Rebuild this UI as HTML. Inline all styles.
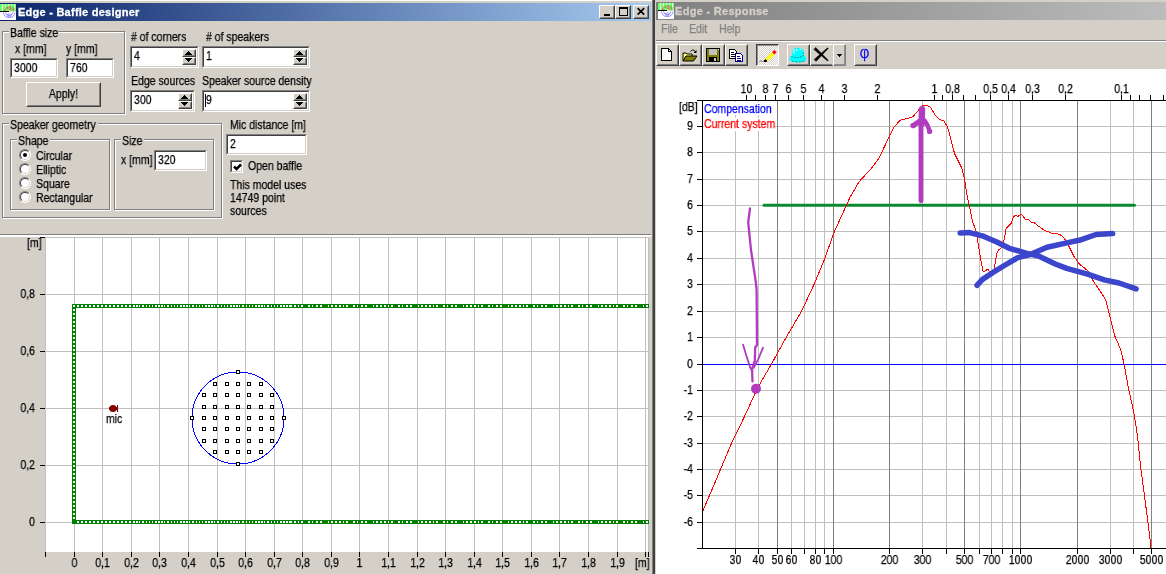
<!DOCTYPE html><html><head><meta charset="utf-8"><title>Edge</title><style>
html,body{margin:0;padding:0;}
html{overflow:hidden;background:#D4D0C8;}
body{width:1166px;height:574px;overflow:hidden;background:#D4D0C8;position:relative;
 font-family:"Liberation Sans",sans-serif;font-size:11px;color:#000;line-height:13px;}
.a{position:absolute;white-space:nowrap;}
.t{position:absolute;white-space:nowrap;margin-top:1px;will-change:transform;-webkit-text-stroke:0.25px;height:13px;line-height:13px;font-size:12.4px;transform:scaleX(.847);transform-origin:0 50%;}
.tc{transform-origin:50% 50%;text-align:center;}
.tr{transform-origin:100% 50%;text-align:right;}
.sunk{position:absolute;background:#fff;box-sizing:border-box;
 border:1px solid;border-color:#808080 #fff #fff #808080;}
.sunk:before{content:"";position:absolute;left:0;top:0;right:0;bottom:0;
 border:1px solid;border-color:#404040 #D4D0C8 #D4D0C8 #404040;}
.sunk span{position:absolute;left:3px;top:3px;will-change:transform;-webkit-text-stroke:0.25px;line-height:13px;font-size:12.4px;transform:scaleX(.847);transform-origin:0 50%;white-space:nowrap;}
.btn{position:absolute;background:#D4D0C8;box-sizing:border-box;
 border:1px solid;border-color:#fff #404040 #404040 #fff;}
.btn:before{content:"";position:absolute;left:0;top:0;right:0;bottom:0;
 border:1px solid;border-color:#D4D0C8 #808080 #808080 #D4D0C8;}
.tb{position:absolute;background:#D4D0C8;box-sizing:border-box;
 border:1px solid;border-color:#fff #404040 #404040 #fff;}
.tb:before{content:"";position:absolute;left:0;top:0;right:0;bottom:0;
 border:1px solid;border-color:#D4D0C8 #808080 #808080 #D4D0C8;}
.grp{position:absolute;box-sizing:border-box;border:1px solid #808080;
 box-shadow:1px 1px 0 #fff, inset 1px 1px 0 #fff;}
.gl{position:absolute;margin-top:1px;background:#D4D0C8;padding:0 1px;height:13px;line-height:13px;white-space:nowrap;}
.gl b{display:inline-block;will-change:transform;-webkit-text-stroke:0.25px;font-weight:normal;font-size:12.4px;transform:scaleX(.847);transform-origin:0 50%;}
.radio{position:absolute;width:12px;height:12px;box-sizing:border-box;border-radius:50%;background:#fff;
 border:1px solid;border-color:#808080 #fff #fff #808080;}
.radio:before{content:"";position:absolute;left:0;top:0;right:0;bottom:0;border-radius:50%;
 border:1px solid;border-color:#404040 #D4D0C8 #D4D0C8 #404040;}
.ud{position:absolute;width:14px;height:8px;background:#D4D0C8;box-sizing:border-box;
 border:1px solid;border-color:#fff #404040 #404040 #fff;}
.ud:before{content:"";position:absolute;left:0;top:0;right:0;bottom:0;
 border:1px solid;border-color:#D4D0C8 #808080 #808080 #D4D0C8;}
svg{position:absolute;left:0;top:0;overflow:visible;}
svg text{font-family:"Liberation Sans",sans-serif;font-size:11px;}
</style></head><body>
<div class="a" style="left:0;top:0;width:652px;height:1px;background:#fff"></div>
<div class="a" style="left:0;top:3px;width:651px;height:18px;background:linear-gradient(90deg,#0A246A 0%,#A6CAF0 100%)"></div>
<svg class="a" style="left:0px;top:4px" width="16" height="16" viewBox="0 0 16 16"><rect x="0" y="0" width="16" height="16" fill="#fff"/><rect x="0" y="0" width="16" height="7.5" fill="#66FF66"/><rect x="2.2" y="0" width="0.9" height="7.5" fill="#fff"/><rect x="5.0" y="0" width="0.9" height="7.5" fill="#fff"/><rect x="8.2" y="0" width="0.9" height="7.5" fill="#fff"/><rect x="11.2" y="0" width="0.9" height="7.5" fill="#fff"/><rect x="14.2" y="0" width="0.9" height="7.5" fill="#fff"/><path d="M4 5.5h1.5v1.5h-1.5z M6.5 3h1.5v1.8h-1.5z M9.2 2.2h1.6v1.5h-1.6z M9.6 4.3h1.5v1.6h-1.5z M12.2 3.2h1.6v1.6h-1.6z M12.6 5.3h1.4v1.5h-1.4z M3.4 6.4h1.2v1h-1.2z" fill="#5AA82A"/><path d="M5.4 3.2v3.6M8.4 2v4.5M11.4 2v5.5M14.1 4v3.5" stroke="#FF6060" stroke-width=".9" fill="none" opacity=".85"/><rect x="0" y="7" width="9" height="1" fill="#000"/><path d="M3.5 8.5 A5.8 5.8 0 0 0 15 8.5 M5.5 8.5 A3.8 3.8 0 0 0 13 8.5 M7 11 A3 3 0 0 1 11.5 11 M7.5 12.6 A3 3 0 0 1 11 12.6" stroke="#6A6AFF" stroke-width="1" fill="none" opacity=".75"/></svg>
<div class="a" style="left:17.5px;top:5px;height:14px;line-height:14px;color:#fff;font-weight:bold;font-size:11px;letter-spacing:0.25px;-webkit-text-stroke:0.3px;will-change:transform" id="ttl1">Edge - Baffle designer</div>
<div class="btn" style="left:599px;top:5px;width:16px;height:14px"><svg width="12" height="10" style="left:1px;top:1px" viewBox="0 0 12 10"><rect x="3" y="7" width="6" height="2" fill="#000"/></svg></div>
<div class="btn" style="left:615px;top:5px;width:16px;height:14px"><svg width="12" height="10" style="left:1px;top:1px" viewBox="0 0 12 10"><rect x="2.5" y="1.5" width="8" height="7" fill="none" stroke="#000"/><rect x="2" y="0" width="9" height="2" fill="#000"/></svg></div>
<div class="btn" style="left:633px;top:5px;width:16px;height:14px"><svg width="12" height="10" style="left:1px;top:1px" viewBox="0 0 12 10"><path d="M2.6 1.2 L9.2 7.6 M9.2 1.2 L2.6 7.6" stroke="#000" stroke-width="1.7" fill="none"/></svg></div>
<div class="a" style="left:652px;top:0;width:1px;height:574px;background:#808080"></div>
<div class="a" style="left:653px;top:0;width:2px;height:574px;background:#404040"></div>
<div class="grp" style="left:2px;top:31px;width:123px;height:83px"></div>
<div class="gl" style="left:9px;top:26px;width:47px"><b>Baffle size</b></div>
<div class="t" style="left:15px;top:42px">x [mm]</div>
<div class="t" style="left:66px;top:42px">y [mm]</div>
<div class="sunk" style="left:10px;top:58px;width:48px;height:20px"><span>3000</span></div>
<div class="sunk" style="left:66px;top:58px;width:48px;height:20px"><span>760</span></div>
<div class="btn" style="left:26px;top:82px;width:75px;height:25px"><div class="t tc" style="left:0;width:73px;top:4px">Apply!</div></div>
<div class="t" style="left:131px;top:30px"># of corners</div>
<div class="t" style="left:206px;top:30px"># of speakers</div>
<div class="sunk" style="left:130px;top:46px;width:69px;height:22px"><span style="top:3px;left:3px">4</span><div class="ud" style="left:51px;top:2px"><svg width="14" height="8" style="left:-1px;top:-1px" viewBox="0 0 14 8"><g shape-rendering="crispEdges" fill="#000"><rect x="6" y="2" width="1" height="1"/><rect x="5" y="3" width="3" height="1"/><rect x="4" y="4" width="5" height="1"/><rect x="3" y="5" width="7" height="1"/></g></svg></div><div class="ud" style="left:51px;top:10px"><svg width="14" height="8" style="left:-1px;top:-1px" viewBox="0 0 14 8"><g shape-rendering="crispEdges" fill="#000"><rect x="3" y="1" width="7" height="1"/><rect x="4" y="2" width="5" height="1"/><rect x="5" y="3" width="3" height="1"/><rect x="6" y="4" width="1" height="1"/></g></svg></div></div>
<div class="sunk" style="left:202px;top:46px;width:108px;height:22px"><span style="top:3px;left:3px">1</span><div class="ud" style="left:90px;top:2px"><svg width="14" height="8" style="left:-1px;top:-1px" viewBox="0 0 14 8"><g shape-rendering="crispEdges" fill="#000"><rect x="6" y="2" width="1" height="1"/><rect x="5" y="3" width="3" height="1"/><rect x="4" y="4" width="5" height="1"/><rect x="3" y="5" width="7" height="1"/></g></svg></div><div class="ud" style="left:90px;top:10px"><svg width="14" height="8" style="left:-1px;top:-1px" viewBox="0 0 14 8"><g shape-rendering="crispEdges" fill="#000"><rect x="3" y="1" width="7" height="1"/><rect x="4" y="2" width="5" height="1"/><rect x="5" y="3" width="3" height="1"/><rect x="6" y="4" width="1" height="1"/></g></svg></div></div>
<div class="t" style="left:131px;top:74px">Edge sources</div>
<div class="t" style="left:202px;top:74px">Speaker source density</div>
<div class="sunk" style="left:130px;top:90px;width:65px;height:22px"><span style="top:3px;left:3px">300</span><div class="ud" style="left:47px;top:2px"><svg width="14" height="8" style="left:-1px;top:-1px" viewBox="0 0 14 8"><g shape-rendering="crispEdges" fill="#000"><rect x="6" y="2" width="1" height="1"/><rect x="5" y="3" width="3" height="1"/><rect x="4" y="4" width="5" height="1"/><rect x="3" y="5" width="7" height="1"/></g></svg></div><div class="ud" style="left:47px;top:10px"><svg width="14" height="8" style="left:-1px;top:-1px" viewBox="0 0 14 8"><g shape-rendering="crispEdges" fill="#000"><rect x="3" y="1" width="7" height="1"/><rect x="4" y="2" width="5" height="1"/><rect x="5" y="3" width="3" height="1"/><rect x="6" y="4" width="1" height="1"/></g></svg></div></div>
<div class="sunk" style="left:202px;top:90px;width:108px;height:22px"><span style="top:3px;left:3px">9</span><div class="a" style="left:2px;top:3px;width:1px;height:13px;background:#000"></div><div class="ud" style="left:90px;top:2px"><svg width="14" height="8" style="left:-1px;top:-1px" viewBox="0 0 14 8"><g shape-rendering="crispEdges" fill="#000"><rect x="6" y="2" width="1" height="1"/><rect x="5" y="3" width="3" height="1"/><rect x="4" y="4" width="5" height="1"/><rect x="3" y="5" width="7" height="1"/></g></svg></div><div class="ud" style="left:90px;top:10px"><svg width="14" height="8" style="left:-1px;top:-1px" viewBox="0 0 14 8"><g shape-rendering="crispEdges" fill="#000"><rect x="3" y="1" width="7" height="1"/><rect x="4" y="2" width="5" height="1"/><rect x="5" y="3" width="3" height="1"/><rect x="6" y="4" width="1" height="1"/></g></svg></div></div>
<div class="grp" style="left:2px;top:123px;width:220px;height:95px"></div>
<div class="gl" style="left:9px;top:118px;width:87px"><b>Speaker geometry</b></div>
<div class="grp" style="left:10px;top:139px;width:100px;height:71px"></div>
<div class="gl" style="left:17px;top:134px;width:31px"><b>Shape</b></div>
<div class="grp" style="left:114px;top:139px;width:100px;height:71px"></div>
<div class="gl" style="left:121px;top:134px;width:21px"><b>Size</b></div>
<div class="radio" style="left:19px;top:149px"><div class="a" style="left:3px;top:3px;width:4px;height:4px;border-radius:50%;background:#000"></div></div>
<div class="t" style="left:36px;top:149px">Circular</div>
<div class="radio" style="left:19px;top:163px"></div>
<div class="t" style="left:36px;top:163px">Elliptic</div>
<div class="radio" style="left:19px;top:177px"></div>
<div class="t" style="left:36px;top:177px">Square</div>
<div class="radio" style="left:19px;top:191px"></div>
<div class="t" style="left:36px;top:191px">Rectangular</div>
<div class="t" style="left:121px;top:153px">x [mm]</div>
<div class="sunk" style="left:154px;top:150px;width:53px;height:21px"><span>320</span></div>
<div class="t" style="left:230px;top:118px">Mic distance [m]</div>
<div class="sunk" style="left:226px;top:134px;width:81px;height:21px"><span>2</span></div>
<div class="sunk" style="left:230px;top:160px;width:13px;height:13px"><svg width="9" height="9" style="left:2px;top:2px" viewBox="0 0 9 9"><path d="M1 3.5 L3.5 6 L8 1.5" stroke="#000" stroke-width="2.5" fill="none"/></svg></div>
<div class="t" style="left:248px;top:159px">Open baffle</div>
<div class="t" style="left:230px;top:178px">This model uses</div>
<div class="t" style="left:230px;top:191px">14749 point</div>
<div class="t" style="left:230px;top:204px">sources</div>
<div class="a" style="left:0;top:234px;width:651px;height:1px;background:#808080"></div>
<div class="a" style="left:0;top:235px;width:651px;height:2px;background:#fff"></div>
<svg id="lchart" width="652" height="574" viewBox="0 0 652 574" shape-rendering="crispEdges"><rect x="45" y="237" width="604" height="315" fill="#C0C0C0"/><rect x="46" y="238" width="603" height="314" fill="#fff"/><rect x="74" y="238" width="1" height="314" fill="#C0C0C0"/><rect x="74" y="552" width="1" height="5" fill="#000"/><rect x="102" y="238" width="1" height="314" fill="#C0C0C0"/><rect x="102" y="552" width="1" height="5" fill="#000"/><rect x="131" y="238" width="1" height="314" fill="#C0C0C0"/><rect x="131" y="552" width="1" height="5" fill="#000"/><rect x="159" y="238" width="1" height="314" fill="#C0C0C0"/><rect x="159" y="552" width="1" height="5" fill="#000"/><rect x="188" y="238" width="1" height="314" fill="#C0C0C0"/><rect x="188" y="552" width="1" height="5" fill="#000"/><rect x="217" y="238" width="1" height="314" fill="#C0C0C0"/><rect x="217" y="552" width="1" height="5" fill="#000"/><rect x="245" y="238" width="1" height="314" fill="#C0C0C0"/><rect x="245" y="552" width="1" height="5" fill="#000"/><rect x="274" y="238" width="1" height="314" fill="#C0C0C0"/><rect x="274" y="552" width="1" height="5" fill="#000"/><rect x="302" y="238" width="1" height="314" fill="#C0C0C0"/><rect x="302" y="552" width="1" height="5" fill="#000"/><rect x="331" y="238" width="1" height="314" fill="#C0C0C0"/><rect x="331" y="552" width="1" height="5" fill="#000"/><rect x="359" y="238" width="1" height="314" fill="#C0C0C0"/><rect x="359" y="552" width="1" height="5" fill="#000"/><rect x="388" y="238" width="1" height="314" fill="#C0C0C0"/><rect x="388" y="552" width="1" height="5" fill="#000"/><rect x="417" y="238" width="1" height="314" fill="#C0C0C0"/><rect x="417" y="552" width="1" height="5" fill="#000"/><rect x="445" y="238" width="1" height="314" fill="#C0C0C0"/><rect x="445" y="552" width="1" height="5" fill="#000"/><rect x="474" y="238" width="1" height="314" fill="#C0C0C0"/><rect x="474" y="552" width="1" height="5" fill="#000"/><rect x="502" y="238" width="1" height="314" fill="#C0C0C0"/><rect x="502" y="552" width="1" height="5" fill="#000"/><rect x="531" y="238" width="1" height="314" fill="#C0C0C0"/><rect x="531" y="552" width="1" height="5" fill="#000"/><rect x="559" y="238" width="1" height="314" fill="#C0C0C0"/><rect x="559" y="552" width="1" height="5" fill="#000"/><rect x="588" y="238" width="1" height="314" fill="#C0C0C0"/><rect x="588" y="552" width="1" height="5" fill="#000"/><rect x="617" y="238" width="1" height="314" fill="#C0C0C0"/><rect x="617" y="552" width="1" height="5" fill="#000"/><rect x="645" y="238" width="1" height="314" fill="#C0C0C0"/><rect x="645" y="552" width="1" height="5" fill="#000"/><rect x="648" y="238" width="1" height="314" fill="#C0C0C0"/><rect x="648" y="552" width="1" height="5" fill="#000"/><rect x="45" y="552" width="1" height="5" fill="#000"/><rect x="46" y="522" width="603" height="1" fill="#C0C0C0"/><rect x="40" y="522" width="5" height="1" fill="#000"/><rect x="46" y="465" width="603" height="1" fill="#C0C0C0"/><rect x="40" y="465" width="5" height="1" fill="#000"/><rect x="46" y="408" width="603" height="1" fill="#C0C0C0"/><rect x="40" y="408" width="5" height="1" fill="#000"/><rect x="46" y="351" width="603" height="1" fill="#C0C0C0"/><rect x="40" y="351" width="5" height="1" fill="#000"/><rect x="46" y="294" width="603" height="1" fill="#C0C0C0"/><rect x="40" y="294" width="5" height="1" fill="#000"/><rect x="40" y="237" width="5" height="1" fill="#000"/><rect x="72" y="304" width="577" height="4" fill="#008000"/><rect x="72" y="520" width="577" height="4" fill="#008000"/><rect x="72" y="304" width="4" height="220" fill="#008000"/><path d="M77 306 H133" stroke="#fff" stroke-width="2" stroke-dasharray="2 2" fill="none"/><path d="M133 306 H290" stroke="#fff" stroke-width="2" stroke-dasharray="1.5 1.5 1.5 1.5 1 2 2 1.5" fill="none"/><path d="M290 306 H649" stroke="#fff" stroke-width="2" stroke-dasharray="2 2 2 2 1 2 2 5 2 2 1 3 2 2 2 6 1 2 2 2" fill="none"/><path d="M77 522 H133" stroke="#fff" stroke-width="2" stroke-dasharray="2 2" fill="none"/><path d="M133 522 H290" stroke="#fff" stroke-width="2" stroke-dasharray="1.5 1.5 1.5 1.5 1 2 2 1.5" fill="none"/><path d="M290 522 H649" stroke="#fff" stroke-width="2" stroke-dasharray="2 2 2 2 1 2 2 5 2 2 1 3 2 2 2 6 1 2 2 2" fill="none"/><path d="M74 305 V521" stroke="#fff" stroke-width="2" stroke-dasharray="2 2" fill="none"/><circle cx="238" cy="418" r="46" fill="none" stroke="#0000FF" stroke-width="1" shape-rendering="crispEdges"/><rect x="213.5" y="382.5" width="3" height="3" fill="#fff" stroke="#000" stroke-width="1"/><rect x="225.5" y="382.5" width="3" height="3" fill="#fff" stroke="#000" stroke-width="1"/><rect x="236.5" y="382.5" width="3" height="3" fill="#fff" stroke="#000" stroke-width="1"/><rect x="247.5" y="382.5" width="3" height="3" fill="#fff" stroke="#000" stroke-width="1"/><rect x="259.5" y="382.5" width="3" height="3" fill="#fff" stroke="#000" stroke-width="1"/><rect x="202.5" y="393.5" width="3" height="3" fill="#fff" stroke="#000" stroke-width="1"/><rect x="213.5" y="393.5" width="3" height="3" fill="#fff" stroke="#000" stroke-width="1"/><rect x="225.5" y="393.5" width="3" height="3" fill="#fff" stroke="#000" stroke-width="1"/><rect x="236.5" y="393.5" width="3" height="3" fill="#fff" stroke="#000" stroke-width="1"/><rect x="247.5" y="393.5" width="3" height="3" fill="#fff" stroke="#000" stroke-width="1"/><rect x="259.5" y="393.5" width="3" height="3" fill="#fff" stroke="#000" stroke-width="1"/><rect x="270.5" y="393.5" width="3" height="3" fill="#fff" stroke="#000" stroke-width="1"/><rect x="202.5" y="405.5" width="3" height="3" fill="#fff" stroke="#000" stroke-width="1"/><rect x="213.5" y="405.5" width="3" height="3" fill="#fff" stroke="#000" stroke-width="1"/><rect x="225.5" y="405.5" width="3" height="3" fill="#fff" stroke="#000" stroke-width="1"/><rect x="236.5" y="405.5" width="3" height="3" fill="#fff" stroke="#000" stroke-width="1"/><rect x="247.5" y="405.5" width="3" height="3" fill="#fff" stroke="#000" stroke-width="1"/><rect x="259.5" y="405.5" width="3" height="3" fill="#fff" stroke="#000" stroke-width="1"/><rect x="270.5" y="405.5" width="3" height="3" fill="#fff" stroke="#000" stroke-width="1"/><rect x="202.5" y="416.5" width="3" height="3" fill="#fff" stroke="#000" stroke-width="1"/><rect x="213.5" y="416.5" width="3" height="3" fill="#fff" stroke="#000" stroke-width="1"/><rect x="225.5" y="416.5" width="3" height="3" fill="#fff" stroke="#000" stroke-width="1"/><rect x="236.5" y="416.5" width="3" height="3" fill="#fff" stroke="#000" stroke-width="1"/><rect x="247.5" y="416.5" width="3" height="3" fill="#fff" stroke="#000" stroke-width="1"/><rect x="259.5" y="416.5" width="3" height="3" fill="#fff" stroke="#000" stroke-width="1"/><rect x="270.5" y="416.5" width="3" height="3" fill="#fff" stroke="#000" stroke-width="1"/><rect x="202.5" y="427.5" width="3" height="3" fill="#fff" stroke="#000" stroke-width="1"/><rect x="213.5" y="427.5" width="3" height="3" fill="#fff" stroke="#000" stroke-width="1"/><rect x="225.5" y="427.5" width="3" height="3" fill="#fff" stroke="#000" stroke-width="1"/><rect x="236.5" y="427.5" width="3" height="3" fill="#fff" stroke="#000" stroke-width="1"/><rect x="247.5" y="427.5" width="3" height="3" fill="#fff" stroke="#000" stroke-width="1"/><rect x="259.5" y="427.5" width="3" height="3" fill="#fff" stroke="#000" stroke-width="1"/><rect x="270.5" y="427.5" width="3" height="3" fill="#fff" stroke="#000" stroke-width="1"/><rect x="202.5" y="439.5" width="3" height="3" fill="#fff" stroke="#000" stroke-width="1"/><rect x="213.5" y="439.5" width="3" height="3" fill="#fff" stroke="#000" stroke-width="1"/><rect x="225.5" y="439.5" width="3" height="3" fill="#fff" stroke="#000" stroke-width="1"/><rect x="236.5" y="439.5" width="3" height="3" fill="#fff" stroke="#000" stroke-width="1"/><rect x="247.5" y="439.5" width="3" height="3" fill="#fff" stroke="#000" stroke-width="1"/><rect x="259.5" y="439.5" width="3" height="3" fill="#fff" stroke="#000" stroke-width="1"/><rect x="270.5" y="439.5" width="3" height="3" fill="#fff" stroke="#000" stroke-width="1"/><rect x="213.5" y="450.5" width="3" height="3" fill="#fff" stroke="#000" stroke-width="1"/><rect x="225.5" y="450.5" width="3" height="3" fill="#fff" stroke="#000" stroke-width="1"/><rect x="236.5" y="450.5" width="3" height="3" fill="#fff" stroke="#000" stroke-width="1"/><rect x="247.5" y="450.5" width="3" height="3" fill="#fff" stroke="#000" stroke-width="1"/><rect x="259.5" y="450.5" width="3" height="3" fill="#fff" stroke="#000" stroke-width="1"/><rect x="236.5" y="370.5" width="3" height="3" fill="#fff" stroke="#000" stroke-width="1"/><rect x="236.5" y="462.5" width="3" height="3" fill="#fff" stroke="#000" stroke-width="1"/><rect x="190.5" y="416.5" width="3" height="3" fill="#fff" stroke="#000" stroke-width="1"/><rect x="282.5" y="416.5" width="3" height="3" fill="#fff" stroke="#000" stroke-width="1"/><circle cx="113" cy="408.5" r="3.6" fill="#800000" shape-rendering="auto"/><rect x="109" y="407" width="9" height="3" fill="#800000"/><rect x="117" y="405" width="1" height="7" fill="#800000"/></svg>
<div class="t" style="left:27px;top:236px">[m]</div>
<div class="t tr" style="left:0;width:35px;top:515px">0</div>
<div class="t tr" style="left:0;width:35px;top:458px">0,2</div>
<div class="t tr" style="left:0;width:35px;top:401px">0,4</div>
<div class="t tr" style="left:0;width:35px;top:344px">0,6</div>
<div class="t tr" style="left:0;width:35px;top:287px">0,8</div>
<div class="t tc" style="left:54px;width:41px;top:556px">0</div>
<div class="t tc" style="left:82px;width:41px;top:556px">0,1</div>
<div class="t tc" style="left:111px;width:41px;top:556px">0,2</div>
<div class="t tc" style="left:139px;width:41px;top:556px">0,3</div>
<div class="t tc" style="left:168px;width:41px;top:556px">0,4</div>
<div class="t tc" style="left:197px;width:41px;top:556px">0,5</div>
<div class="t tc" style="left:225px;width:41px;top:556px">0,6</div>
<div class="t tc" style="left:254px;width:41px;top:556px">0,7</div>
<div class="t tc" style="left:282px;width:41px;top:556px">0,8</div>
<div class="t tc" style="left:311px;width:41px;top:556px">0,9</div>
<div class="t tc" style="left:339px;width:41px;top:556px">1</div>
<div class="t tc" style="left:368px;width:41px;top:556px">1,1</div>
<div class="t tc" style="left:397px;width:41px;top:556px">1,2</div>
<div class="t tc" style="left:425px;width:41px;top:556px">1,3</div>
<div class="t tc" style="left:454px;width:41px;top:556px">1,4</div>
<div class="t tc" style="left:482px;width:41px;top:556px">1,5</div>
<div class="t tc" style="left:511px;width:41px;top:556px">1,6</div>
<div class="t tc" style="left:539px;width:41px;top:556px">1,7</div>
<div class="t tc" style="left:568px;width:41px;top:556px">1,8</div>
<div class="t tc" style="left:597px;width:41px;top:556px">1,9</div>
<div class="t" style="left:635px;top:556px">[m]</div>
<div class="t" style="left:106px;top:412.4px">mic</div>
<div class="a" style="left:656px;top:2px;width:510px;height:18px;background:linear-gradient(90deg,#808080 0%,#BCBCBC 100%)"></div>
<svg class="a" style="left:658px;top:3px" width="16" height="16" viewBox="0 0 16 16"><rect x="0" y="0" width="16" height="16" fill="#fff"/><rect x="0" y="0" width="16" height="7.5" fill="#66FF66"/><rect x="2.2" y="0" width="0.9" height="7.5" fill="#fff"/><rect x="5.0" y="0" width="0.9" height="7.5" fill="#fff"/><rect x="8.2" y="0" width="0.9" height="7.5" fill="#fff"/><rect x="11.2" y="0" width="0.9" height="7.5" fill="#fff"/><rect x="14.2" y="0" width="0.9" height="7.5" fill="#fff"/><path d="M4 5.5h1.5v1.5h-1.5z M6.5 3h1.5v1.8h-1.5z M9.2 2.2h1.6v1.5h-1.6z M9.6 4.3h1.5v1.6h-1.5z M12.2 3.2h1.6v1.6h-1.6z M12.6 5.3h1.4v1.5h-1.4z M3.4 6.4h1.2v1h-1.2z" fill="#5AA82A"/><path d="M5.4 3.2v3.6M8.4 2v4.5M11.4 2v5.5M14.1 4v3.5" stroke="#FF6060" stroke-width=".9" fill="none" opacity=".85"/><rect x="0" y="7" width="9" height="1" fill="#000"/><path d="M3.5 8.5 A5.8 5.8 0 0 0 15 8.5 M5.5 8.5 A3.8 3.8 0 0 0 13 8.5 M7 11 A3 3 0 0 1 11.5 11 M7.5 12.6 A3 3 0 0 1 11 12.6" stroke="#6A6AFF" stroke-width="1" fill="none" opacity=".75"/></svg>
<div class="a" style="left:674.5px;top:4px;height:14px;line-height:14px;color:#D4D0C8;font-weight:bold;font-size:11px;letter-spacing:0.3px;-webkit-text-stroke:0.3px;will-change:transform" id="ttl2">Edge - Response</div>
<div class="t" style="left:661px;top:22px;color:#808080">File</div>
<div class="t" style="left:689px;top:22px;color:#808080">Edit</div>
<div class="t" style="left:719px;top:22px;color:#808080">Help</div>
<div class="a" style="left:656px;top:40px;width:510px;height:1px;background:#808080"></div>
<div class="a" style="left:656px;top:41px;width:510px;height:1px;background:#fff"></div>
<div class="a" style="left:656px;top:69px;width:510px;height:505px;background:#fff"></div>
<div class="tb" style="left:656px;top:44px;width:23px;height:22px"><svg width="16" height="16" style="left:1px;top:2px" viewBox="0 0 16 16" shape-rendering="crispEdges"><path d="M3.5 1.5 H10.5 L13.5 4.5 V13.5 H3.5 Z" fill="#fff" stroke="#000"/><path d="M10.5 1.5 V4.5 H13.5" fill="none" stroke="#000"/></svg></div>
<div class="tb" style="left:679px;top:44px;width:23px;height:22px"><svg width="18" height="16" style="left:1px;top:2px" viewBox="0 0 18 16"><path d="M2 14 V6 H5 L6 7 H11 V9" fill="#FFFF80" stroke="#000" stroke-width="1"/><path d="M2 14 L5 9 H16 L12.5 14 Z" fill="#808000" stroke="#000" stroke-width="1"/><path d="M9.5 4.5 C11 2.5 13.5 2.5 14.5 5" fill="none" stroke="#000" stroke-width="1"/><path d="M15.5 3 V6 H12.5 Z" fill="#000"/></svg></div>
<div class="tb" style="left:702px;top:44px;width:23px;height:22px"><svg width="16" height="16" style="left:2px;top:2px" viewBox="0 0 16 16" shape-rendering="crispEdges"><rect x="1.5" y="1.5" width="13" height="13" fill="#808000" stroke="#000"/><rect x="4" y="2" width="8" height="6" fill="#C0C0C0"/><rect x="4" y="10" width="8" height="4" fill="#000"/><rect x="9" y="11" width="2" height="3" fill="#C0C0C0"/><rect x="13" y="2" width="1" height="1" fill="#fff"/></svg></div>
<div class="tb" style="left:725px;top:44px;width:23px;height:22px"><svg width="18" height="16" style="left:1px;top:2px" viewBox="0 0 18 16" shape-rendering="crispEdges"><path d="M2.5 2.5 H7.5 L9.5 4.5 V11.5 H2.5 Z" fill="#fff" stroke="#000"/><path d="M4 5.5 H7 M4 7.5 H8 M4 9.5 H8" stroke="#000"/><path d="M8.5 6.5 H13.5 L15.5 8.5 V14.5 H8.5 Z" fill="#fff" stroke="#000080"/><path d="M10 9.5 H13 M10 11.5 H14 M10 13 H14" stroke="#000080"/></svg></div>
<div class="a" style="left:756px;top:44px;width:23px;height:22px;box-sizing:border-box;border:1px solid;border-color:#404040 #fff #fff #404040;box-shadow:inset 1px 1px 0 #909090;background-color:#fff;background-image:linear-gradient(45deg,#D4D0C8 25%,transparent 25%,transparent 75%,#D4D0C8 75%),linear-gradient(45deg,#D4D0C8 25%,transparent 25%,transparent 75%,#D4D0C8 75%);background-size:2px 2px;background-position:0 0,1px 1px"><svg width="20" height="18" style="left:0px;top:1px" viewBox="0 0 20 18"><path d="M8.3 13 L15.3 6 L17.6 8.3 L10.6 15.3 Z" fill="#FFFF00"/><rect x="15.8" y="4.6" width="3.2" height="3.2" fill="#FF0020" transform="rotate(45 17.4 6.2)"/><path d="M7.2 15.8 L8.3 13 L10.6 15.3 Z" fill="#000"/><rect x="7" y="14" width="2.6" height="2" fill="#000"/><path d="M2.5 15.5 C3.5 13.8 4.5 16.2 6.8 15.2" fill="none" stroke="#707070" stroke-width="1"/></svg></div>
<div class="tb" style="left:787px;top:44px;width:23px;height:22px"><svg width="20" height="18" style="left:0px;top:1px" viewBox="0 0 20 18"><path d="M3.7 10 C3.7 4 5.5 1.8 10 1.8 C14.5 1.8 16.3 4 16.3 10 L18.1 11.5 V14.6 C15 17.2 5 17.2 1.6 14.6 V11.5 Z" fill="#00FFFF"/><path d="M6 3.5 V8 M8.6 3 V5 M11.5 3.4 H13" stroke="#E8FFFF" stroke-width="1.1" fill="none"/><path d="M3.5 10.5 C7 12 12 12 15 10 L15.5 6.5" stroke="#009090" stroke-width="1" fill="none" stroke-dasharray="1.6 1.2"/><path d="M4 15 C8 16.2 13 16.2 17.5 14.8" stroke="#00A0A0" stroke-width="1" fill="none" stroke-dasharray="2 1.5"/></svg></div>
<div class="a" style="left:810px;top:44px;width:23px;height:22px;box-sizing:border-box;border:1px solid;border-color:#fff #D4D0C8 #404040 #fff;box-shadow:inset 0 -1px 0 #808080"><svg width="20" height="18" style="left:1px;top:1px" viewBox="0 0 20 18"><path d="M1.9 3.4 L3.7 1.4 L16.24 14.23 L15.56 14.97 Z M15.55 1.74 L16.25 2.46 L4.0 15.4 L2.2 13.4 Z" fill="#000" stroke="#000" stroke-width=".5" stroke-linejoin="round"/></svg></div>
<div class="a" style="left:833px;top:44px;width:13px;height:22px;box-sizing:border-box;border:1px solid;border-color:#fff #808080 #808080 #fff;box-shadow:inset -1px -1px 0 #909090"><svg width="11" height="18" style="left:0px;top:1px" viewBox="0 0 11 18" shape-rendering="crispEdges"><path d="M2.5 8 H8.5 L5.5 11 Z" fill="#000"/></svg></div>
<div class="tb" style="left:854px;top:44px;width:23px;height:22px"><div class="a" style="left:-1px;top:-1px;width:21px;height:18px;line-height:18px;text-align:center;color:#0000FF;font-size:16px;font-weight:200;-webkit-text-stroke:0.45px #0000FF;font-family:'DejaVu Sans','Liberation Sans',sans-serif">&#966;</div></div>
<svg id="rchart" width="1166" height="574" viewBox="0 0 1166 574"><g shape-rendering="crispEdges"><rect x="703" y="522" width="463" height="1" fill="#C0C0C0"/><rect x="697" y="522" width="6" height="1" fill="#000"/><rect x="703" y="495" width="463" height="1" fill="#C0C0C0"/><rect x="697" y="495" width="6" height="1" fill="#000"/><rect x="703" y="469" width="463" height="1" fill="#C0C0C0"/><rect x="697" y="469" width="6" height="1" fill="#000"/><rect x="703" y="443" width="463" height="1" fill="#C0C0C0"/><rect x="697" y="443" width="6" height="1" fill="#000"/><rect x="703" y="416" width="463" height="1" fill="#C0C0C0"/><rect x="697" y="416" width="6" height="1" fill="#000"/><rect x="703" y="390" width="463" height="1" fill="#C0C0C0"/><rect x="697" y="390" width="6" height="1" fill="#000"/><rect x="703" y="364" width="463" height="1" fill="#C0C0C0"/><rect x="697" y="364" width="6" height="1" fill="#000"/><rect x="703" y="337" width="463" height="1" fill="#C0C0C0"/><rect x="697" y="337" width="6" height="1" fill="#000"/><rect x="703" y="311" width="463" height="1" fill="#C0C0C0"/><rect x="697" y="311" width="6" height="1" fill="#000"/><rect x="703" y="284" width="463" height="1" fill="#C0C0C0"/><rect x="697" y="284" width="6" height="1" fill="#000"/><rect x="703" y="258" width="463" height="1" fill="#C0C0C0"/><rect x="697" y="258" width="6" height="1" fill="#000"/><rect x="703" y="231" width="463" height="1" fill="#C0C0C0"/><rect x="697" y="231" width="6" height="1" fill="#000"/><rect x="703" y="205" width="463" height="1" fill="#C0C0C0"/><rect x="697" y="205" width="6" height="1" fill="#000"/><rect x="703" y="179" width="463" height="1" fill="#C0C0C0"/><rect x="697" y="179" width="6" height="1" fill="#000"/><rect x="703" y="152" width="463" height="1" fill="#C0C0C0"/><rect x="697" y="152" width="6" height="1" fill="#000"/><rect x="703" y="126" width="463" height="1" fill="#C0C0C0"/><rect x="697" y="126" width="6" height="1" fill="#000"/><rect x="735" y="101" width="1" height="447" fill="#C0C0C0"/><rect x="735" y="549" width="1" height="5" fill="#000"/><rect x="758" y="101" width="1" height="447" fill="#C0C0C0"/><rect x="758" y="549" width="1" height="5" fill="#000"/><rect x="777" y="101" width="1" height="447" fill="#808080"/><rect x="777" y="549" width="1" height="5" fill="#000"/><rect x="791" y="101" width="1" height="447" fill="#C0C0C0"/><rect x="791" y="549" width="1" height="5" fill="#000"/><rect x="804" y="101" width="1" height="447" fill="#C0C0C0"/><rect x="804" y="549" width="1" height="5" fill="#000"/><rect x="815" y="101" width="1" height="447" fill="#C0C0C0"/><rect x="815" y="549" width="1" height="5" fill="#000"/><rect x="824" y="101" width="1" height="447" fill="#C0C0C0"/><rect x="824" y="549" width="1" height="5" fill="#000"/><rect x="833" y="101" width="1" height="447" fill="#808080"/><rect x="833" y="549" width="1" height="5" fill="#000"/><rect x="889" y="101" width="1" height="447" fill="#808080"/><rect x="889" y="549" width="1" height="5" fill="#000"/><rect x="922" y="101" width="1" height="447" fill="#C0C0C0"/><rect x="922" y="549" width="1" height="5" fill="#000"/><rect x="946" y="101" width="1" height="447" fill="#C0C0C0"/><rect x="946" y="549" width="1" height="5" fill="#000"/><rect x="964" y="101" width="1" height="447" fill="#808080"/><rect x="964" y="549" width="1" height="5" fill="#000"/><rect x="979" y="101" width="1" height="447" fill="#C0C0C0"/><rect x="979" y="549" width="1" height="5" fill="#000"/><rect x="991" y="101" width="1" height="447" fill="#C0C0C0"/><rect x="991" y="549" width="1" height="5" fill="#000"/><rect x="1002" y="101" width="1" height="447" fill="#C0C0C0"/><rect x="1002" y="549" width="1" height="5" fill="#000"/><rect x="1012" y="101" width="1" height="447" fill="#C0C0C0"/><rect x="1012" y="549" width="1" height="5" fill="#000"/><rect x="1020" y="101" width="1" height="447" fill="#808080"/><rect x="1020" y="549" width="1" height="5" fill="#000"/><rect x="1077" y="101" width="1" height="447" fill="#808080"/><rect x="1077" y="549" width="1" height="5" fill="#000"/><rect x="1110" y="101" width="1" height="447" fill="#C0C0C0"/><rect x="1110" y="549" width="1" height="5" fill="#000"/><rect x="1133" y="101" width="1" height="447" fill="#C0C0C0"/><rect x="1133" y="549" width="1" height="5" fill="#000"/><rect x="1151" y="101" width="1" height="447" fill="#808080"/><rect x="1151" y="549" width="1" height="5" fill="#000"/><rect x="697" y="100" width="469" height="1" fill="#000"/><rect x="697" y="548" width="469" height="1" fill="#000"/><rect x="702" y="100" width="1" height="449" fill="#000"/><rect x="746" y="95" width="1" height="5" fill="#000"/><rect x="755" y="95" width="1" height="5" fill="#000"/><rect x="765" y="95" width="1" height="5" fill="#000"/><rect x="775" y="95" width="1" height="5" fill="#000"/><rect x="788" y="95" width="1" height="5" fill="#000"/><rect x="803" y="95" width="1" height="5" fill="#000"/><rect x="821" y="95" width="1" height="5" fill="#000"/><rect x="844" y="95" width="1" height="5" fill="#000"/><rect x="877" y="95" width="1" height="5" fill="#000"/><rect x="934" y="95" width="1" height="5" fill="#000"/><rect x="942" y="95" width="1" height="5" fill="#000"/><rect x="952" y="95" width="1" height="5" fill="#000"/><rect x="963" y="95" width="1" height="5" fill="#000"/><rect x="975" y="95" width="1" height="5" fill="#000"/><rect x="990" y="95" width="1" height="5" fill="#000"/><rect x="1008" y="95" width="1" height="5" fill="#000"/><rect x="1032" y="95" width="1" height="5" fill="#000"/><rect x="1065" y="95" width="1" height="5" fill="#000"/><rect x="1121" y="95" width="1" height="5" fill="#000"/><rect x="1130" y="95" width="1" height="5" fill="#000"/><rect x="1139" y="95" width="1" height="5" fill="#000"/><rect x="1150" y="95" width="1" height="5" fill="#000"/><rect x="1163" y="95" width="1" height="5" fill="#000"/><rect x="703" y="364" width="463" height="1" fill="#0000FF"/><rect x="704" y="102" width="68" height="13" fill="#fff"/><rect x="704" y="118" width="70" height="13" fill="#fff"/></g><path d="M764 205.3 H1134.5" stroke="#0A8A2E" stroke-width="3" fill="none" stroke-linecap="round"/><path d="M703.0 510.6 L711.0 492.0 L720.0 470.5 L731.5 443.4 L744.0 417.5 L756.3 390.8 L763.0 378.5 L771.5 364.0 L778.9 350.5 L784.7 340.0 L802.0 310.3 L814.4 283.6 L824.8 258.5 L833.7 233.3 L846.4 205.2 L850.0 197.4 L858.4 182.8 L862.4 178.0 L870.9 169.2 L879.3 157.7 L887.6 139.9 L893.9 127.4 L900.2 120.1 L906.4 118.6 L912.7 116.9 L919.0 109.6 L923.1 105.4 L926.3 105.0 L930.5 107.5 L935.7 115.9 L939.9 119.7 L944.0 121.1 L947.2 126.3 L950.3 136.8 L954.5 153.5 L961.8 168.1 L964.5 178.6 L967.0 195.3 L969.6 207.5 L972.8 222.2 L975.9 230.5 L979.0 249.3 L981.1 261.9 L983.2 271.9 L986.3 270.2 L988.0 269.2 L990.5 274.4 L992.6 275.5 L994.7 266.1 L996.8 253.5 L998.9 249.8 L1002.0 247.2 L1004.1 239.9 L1006.2 228.4 L1009.3 225.3 L1011.4 223.2 L1013.5 216.9 L1015.6 215.3 L1017.7 216.5 L1021.5 214.2 L1025.0 219.0 L1028.1 219.0 L1031.3 222.2 L1034.4 222.8 L1038.6 226.3 L1044.9 230.5 L1051.1 233.0 L1059.5 234.3 L1063.7 237.4 L1068.9 246.2 L1074.1 256.6 L1079.3 264.0 L1087.6 270.5 L1093.9 282.0 L1102.3 294.5 L1105.8 300.0 L1110.4 318.1 L1114.9 336.2 L1120.8 349.8 L1123.9 363.3 L1128.5 388.2 L1133.9 413.1 L1137.5 435.7 L1140.7 467.4 L1144.3 494.5 L1147.9 521.7 L1151.0 547.5" stroke="#FF0000" stroke-width="1" fill="none" shape-rendering="crispEdges"/><path d="M750 208.5 L748.2 222.4 L751 250 L755.9 282.8 L756.6 290 L757 345 L755.2 347.5 L754.8 361 L752 369 L752.5 381.4" stroke="#B23CC0" stroke-width="2.3" fill="none" stroke-linejoin="round" stroke-linecap="round"/><path d="M743 344.6 L746.3 355.4 L750.3 367.8 L752.3 371" stroke="#B23CC0" stroke-width="1.8" fill="none" stroke-linecap="round"/><path d="M763 347.7 L758.2 359.3 L753.7 367.8" stroke="#B23CC0" stroke-width="1.8" fill="none" stroke-linecap="round"/><circle cx="756" cy="388.8" r="5" fill="#B23CC0"/><path d="M922 109.2 L921.6 124" stroke="#B23CC0" stroke-width="6.4" fill="none" stroke-linecap="round"/><path d="M921 120 L921 200.8" stroke="#B23CC0" stroke-width="4.9" fill="none" stroke-linecap="round"/><path d="M913.4 125.6 L920 120.8" stroke="#B23CC0" stroke-width="5" fill="none" stroke-linecap="round"/><path d="M924.5 120.5 L927.6 125.5 L929.7 131.3" stroke="#B23CC0" stroke-width="4.4" fill="none" stroke-linecap="round" stroke-linejoin="round"/><circle cx="913.2" cy="125.5" r="2.8" fill="#B23CC0"/><circle cx="929.6" cy="131.4" r="2.6" fill="#B23CC0"/><path d="M960.2 233.0 L969.6 232.6 L982.2 235.8 L996.8 242.0 L1009.3 248.3 L1026.0 253.1 L1038.6 256.0 L1055.3 264.0 L1066.7 268.4 L1087.6 274.2 L1104.3 279.9 L1119.0 283.0 L1136.1 288.9" stroke="#3C46CC" stroke-width="5.5" fill="none" stroke-linecap="round" stroke-linejoin="round"/><path d="M977.0 285.3 L982.2 279.6 L992.6 272.7 L1005.2 265.0 L1017.7 257.7 L1030.2 254.6 L1047.0 247.2 L1067.9 242.6 L1081.4 239.7 L1096.0 234.5 L1112.7 233.5" stroke="#3C46CC" stroke-width="5.5" fill="none" stroke-linecap="round" stroke-linejoin="round"/></svg>
<div class="t" style="left:679px;top:99.6px">[dB]</div>
<div class="t" style="left:704px;top:101.6px;color:#0000FF">Compensation</div>
<div class="t" style="left:704px;top:117.4px;color:#FF0000">Current system</div>
<div class="t tr" style="left:660px;width:33px;top:515.4px">-6</div>
<div class="t tr" style="left:660px;width:33px;top:488.4px">-5</div>
<div class="t tr" style="left:660px;width:33px;top:462.4px">-4</div>
<div class="t tr" style="left:660px;width:33px;top:436.4px">-3</div>
<div class="t tr" style="left:660px;width:33px;top:409.4px">-2</div>
<div class="t tr" style="left:660px;width:33px;top:383.4px">-1</div>
<div class="t tr" style="left:660px;width:33px;top:357.4px">0</div>
<div class="t tr" style="left:660px;width:33px;top:330.4px">1</div>
<div class="t tr" style="left:660px;width:33px;top:304.4px">2</div>
<div class="t tr" style="left:660px;width:33px;top:277.4px">3</div>
<div class="t tr" style="left:660px;width:33px;top:251.4px">4</div>
<div class="t tr" style="left:660px;width:33px;top:224.4px">5</div>
<div class="t tr" style="left:660px;width:33px;top:198.4px">6</div>
<div class="t tr" style="left:660px;width:33px;top:172.4px">7</div>
<div class="t tr" style="left:660px;width:33px;top:145.4px">8</div>
<div class="t tr" style="left:660px;width:33px;top:119.4px">9</div>
<div class="t tc" style="left:715px;width:41px;top:553px">30</div>
<div class="t tc" style="left:738px;width:41px;top:553px">40</div>
<div class="t tc" style="left:757px;width:41px;top:553px">50</div>
<div class="t tc" style="left:771px;width:41px;top:553px">60</div>
<div class="t tc" style="left:795px;width:41px;top:553px">80</div>
<div class="t tc" style="left:813px;width:41px;top:553px">100</div>
<div class="t tc" style="left:869px;width:41px;top:553px">200</div>
<div class="t tc" style="left:902px;width:41px;top:553px">300</div>
<div class="t tc" style="left:944px;width:41px;top:553px">500</div>
<div class="t tc" style="left:971px;width:41px;top:553px">700</div>
<div class="t tc" style="left:1000px;width:41px;top:553px">1000</div>
<div class="t tc" style="left:1057px;width:41px;top:553px">2000</div>
<div class="t tc" style="left:1090px;width:41px;top:553px">3000</div>
<div class="t tc" style="left:1131px;width:41px;top:553px">5000</div>
<div class="t tc" style="left:726px;width:41px;top:81.6px">10</div>
<div class="t tc" style="left:745px;width:41px;top:81.6px">8</div>
<div class="t tc" style="left:755px;width:41px;top:81.6px">7</div>
<div class="t tc" style="left:768px;width:41px;top:81.6px">6</div>
<div class="t tc" style="left:783px;width:41px;top:81.6px">5</div>
<div class="t tc" style="left:801px;width:41px;top:81.6px">4</div>
<div class="t tc" style="left:824px;width:41px;top:81.6px">3</div>
<div class="t tc" style="left:857px;width:41px;top:81.6px">2</div>
<div class="t tc" style="left:914px;width:41px;top:81.6px">1</div>
<div class="t tc" style="left:932px;width:41px;top:81.6px">0,8</div>
<div class="t tc" style="left:970px;width:41px;top:81.6px">0,5</div>
<div class="t tc" style="left:988px;width:41px;top:81.6px">0,4</div>
<div class="t tc" style="left:1012px;width:41px;top:81.6px">0,3</div>
<div class="t tc" style="left:1045px;width:41px;top:81.6px">0,2</div>
<div class="t tc" style="left:1101px;width:41px;top:81.6px">0,1</div>
</body></html>
